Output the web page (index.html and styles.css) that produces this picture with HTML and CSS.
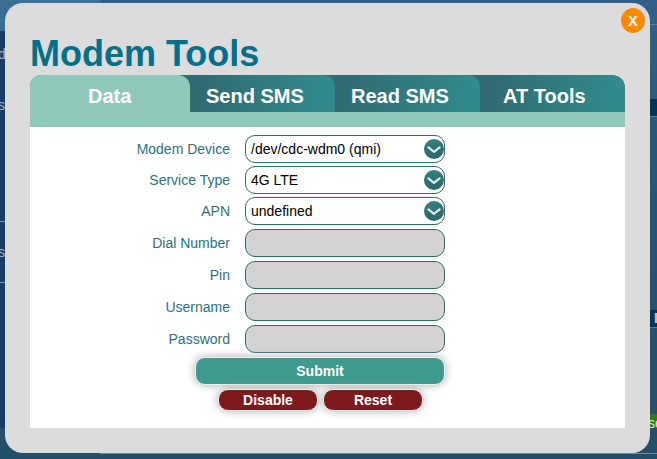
FILE: index.html
```html
<!DOCTYPE html>
<html lang="en">
<head>
<meta charset="utf-8">
<title>Modem Tools</title>
<link rel="stylesheet" href="styles.css">
</head>
<body>
<svg width="0" height="0" class="defs"><defs>
<linearGradient id="ball" x1="0" y1="0" x2="0" y2="1"><stop offset="0" stop-color="#34807f"/><stop offset="1" stop-color="#2c6469"/></linearGradient>
<symbol id="chevron" viewBox="0 0 20 20"><circle cx="10" cy="10" r="10" fill="url(#ball)"/><path d="M4.4 8.4 L10 12.8 L15.6 8.4" fill="none" stroke="#d9f2f2" stroke-width="2.1" stroke-linecap="round" stroke-linejoin="round"/></symbol>
</defs></svg>
<div class="backdrop">
  <div class="page-top"></div>
  <div class="page-main">
    <div class="page-left"><p class="word w1">d</p><p class="word w2">s</p><p class="word w3">s</p></div>
    <div class="page-right"><div class="head h1"></div><div class="head h2">I</div><div class="save">se</div></div>
  </div>
  <div class="page-foot"></div>
</div>
<main class="modal">
  <button class="close">X</button>
  <h1>Modem Tools</h1>
  <section class="panel">
    <nav class="tabs">
      <div class="cell"><a class="tab active">Data</a></div>
      <div class="cell"><a class="tab">Send SMS</a></div>
      <div class="cell"><a class="tab">Read SMS</a></div>
      <div class="cell last"><a class="tab tools">AT Tools</a></div>
    </nav>
    <form class="form">
      <div class="row"><label>Modem Device</label><div class="field select"><span>/dev/cdc-wdm0 (qmi)</span><svg><use href="#chevron"/></svg></div></div>
      <div class="row"><label>Service Type</label><div class="field select"><span>4G LTE</span><svg><use href="#chevron"/></svg></div></div>
      <div class="row"><label>APN</label><div class="field select"><span>undefined</span><svg><use href="#chevron"/></svg></div></div>
      <div class="row text"><label>Dial Number</label><div class="field"></div></div>
      <div class="row text"><label>Pin</label><div class="field"></div></div>
      <div class="row text"><label>Username</label><div class="field"></div></div>
      <div class="row text"><label>Password</label><div class="field"></div></div>
      <button type="button" class="btn submit">Submit</button>
      <div class="actions"><button type="button" class="btn danger">Disable</button><button type="button" class="btn danger">Reset</button></div>
    </form>
  </section>
</main>
</body>
</html>
```
FILE: styles.css
```css
* { box-sizing: border-box; }
body { margin: 0; width: 657px; height: 459px; overflow: hidden; position: relative; font-family: "Liberation Sans", Arial, sans-serif; }
.defs { position: absolute; }
.backdrop { height: 459px; display: flex; flex-direction: column; background: linear-gradient(#315f88, #285779 35%, #244d67); }
.page-top { height: 31px; background: linear-gradient(#5c829c, #5c829c) 100% 24px / 8px 1px no-repeat, linear-gradient(90deg, #3a7095 0 100px, #315f88 102px); }
.page-main { height: 397px; display: flex; justify-content: space-between; }
.page-left { width: 100px; background: #163d6b; display: flex; flex-direction: column; }
.word { margin: 0; color: #a3b2c4; font-size: 14px; line-height: 16px; text-indent: -2px; }
.w1 { margin-top: 15px; }
.w2 { margin-top: 35px; }
.w3 { margin-top: 108px; height: 62px; padding-top: 22px; border: solid #8298b2; border-width: 1px 0; }
.page-right { width: 9px; display: flex; flex-direction: column; }
.head { flex: none; height: 18px; background: #003557; border-bottom: 1px solid #5c829c; color: #c0ccd5; font-size: 14px; line-height: 16px; font-weight: bold; padding-left: 6px; overflow: hidden; }
.h1 { margin-top: 68px; }
.h2 { margin-top: 193px; }
.save { flex: none; margin-top: 86px; height: 18px; background: #2b7a10; color: #d5e5cc; font-size: 14px; line-height: 18px; overflow: hidden; }
.page-foot { height: 31px; background: linear-gradient(#6f8ca0, #6f8ca0) 100px 25px / 557px 1px no-repeat, #244f69; }
.modal { position: absolute; left: 5px; top: 3px; width: 645px; height: 450px; padding: 30px 25px 25px; border-radius: 18px; background: #dcdcdc; }
.close { position: absolute; left: 616px; top: 5px; width: 24px; height: 25px; border: 0; border-radius: 50%; padding: 0; background: #ff8a00; color: #fff; font: bold 14px/24px "Liberation Sans", Arial, sans-serif; }
h1 { margin: 0; height: 42px; font-size: 36px; line-height: 41px; color: #006f89; white-space: nowrap; }
.panel { height: 353px; background: #fff; border-radius: 12px 12px 0 0; }
.tabs { height: 52px; display: grid; grid-template-columns: 160px 145px 145px 145px; padding-bottom: 15px; background: #90c8bb; border-radius: 12px 12px 0 0; overflow: hidden; }
.cell { background: #306b72; }
.tab { display: block; height: 37px; border-radius: 0 12px 0 0; padding-left: 16px; background: linear-gradient(100deg, #306b72 10%, #328a8a 90%); color: #fff; font-size: 20px; line-height: 42px; font-weight: bold; white-space: nowrap; }
.tab.active { padding-left: 58px; background: #90c8bb; }
.tab.tools { padding-left: 23px; }
.last { background: none; }
.form { padding-top: 8px; display: flex; flex-direction: column; }
.row { display: flex; height: 31px; gap: 15px; }
.row.text { height: 32px; padding-top: 1px; }
label { width: 200px; text-align: right; color: #33707c; font-size: 14px; line-height: 28px; }
.field { width: 200px; height: 28px; border: 1px solid #306b72; border-radius: 10px; background: #d3d3d3; }
.select { display: flex; justify-content: space-between; background: #fff; color: #000; font-size: 14px; line-height: 26px; padding-left: 5px; }
.select svg { width: 20px; height: 20px; margin-top: 3px; }
.btn { border: 1px solid #f1f1f1; padding: 0; color: #fff; font: bold 14px/24px "Liberation Sans", Arial, sans-serif; box-shadow: 0 0 8px #aaa; }
.submit { width: 250px; height: 28px; margin: 1px 0 0 165px; border-radius: 10px; background: #409a8e; }
.actions { display: flex; gap: 5px; margin: 4px 0 0 188px; }
.danger { width: 100px; height: 22px; line-height: 18px; border-radius: 10px; background: #7d1a1d; }
```
